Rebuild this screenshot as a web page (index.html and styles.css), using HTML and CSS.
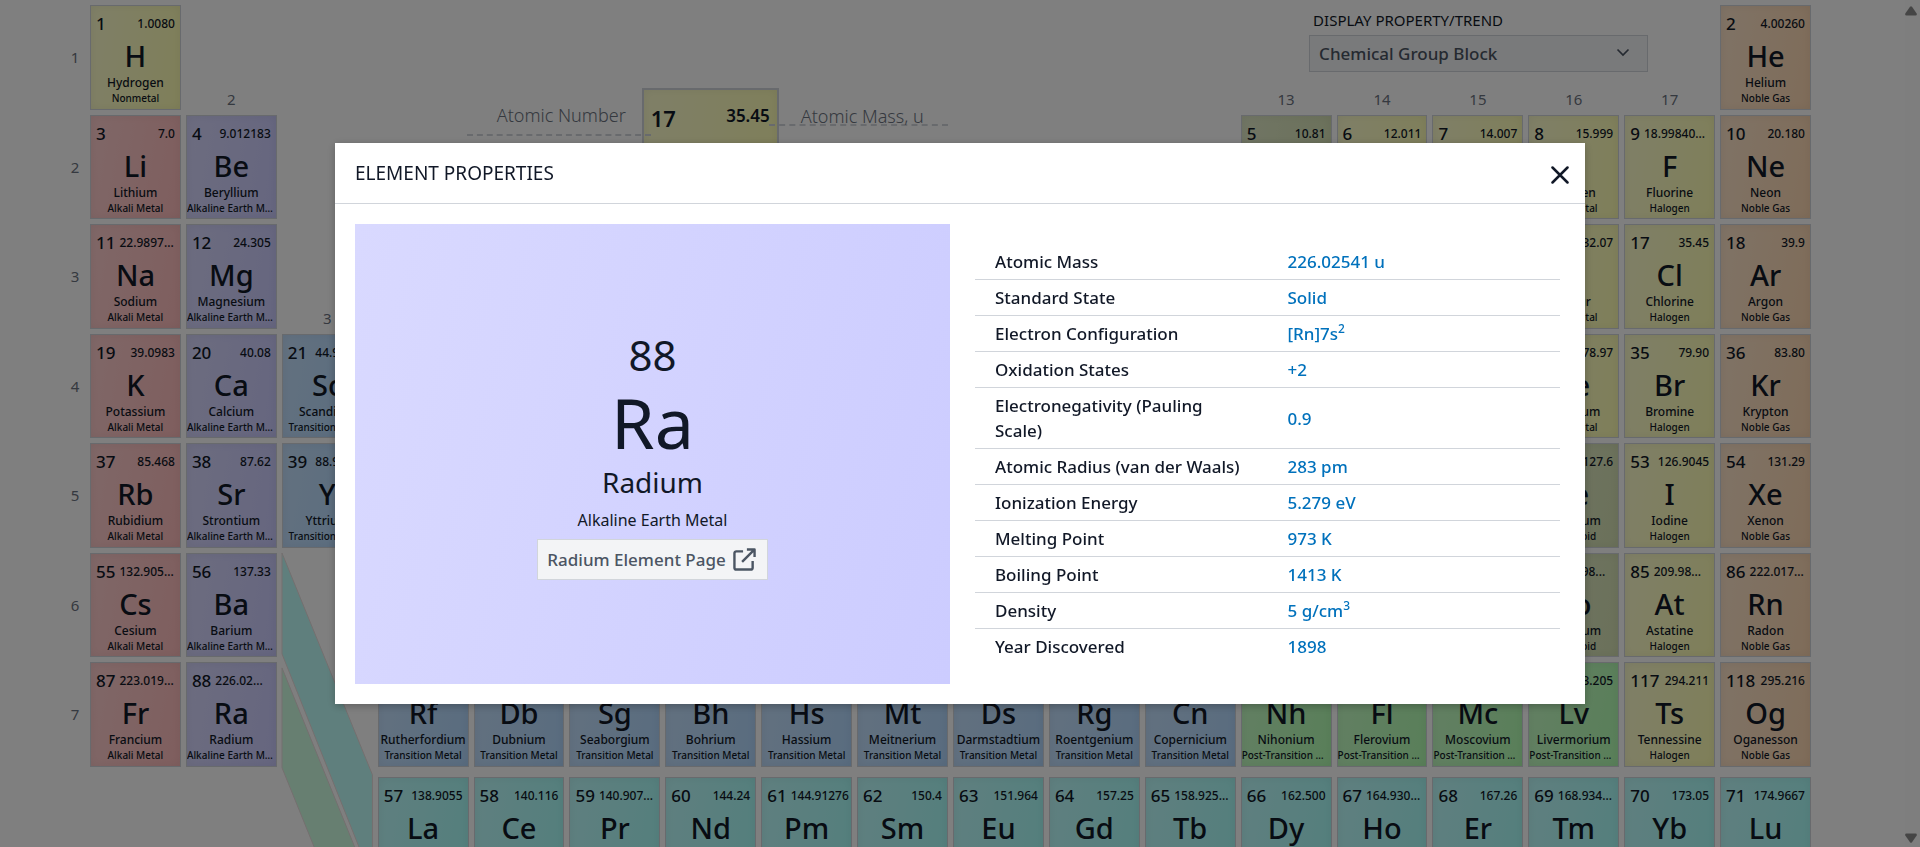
FILE: index.html
```html
<!DOCTYPE html>
<html lang="en">
<head>
<meta charset="utf-8">
<title>Periodic Table of Elements</title>
<link rel="stylesheet" href="styles.css">
</head>
<body>
<main class="table-grid" id="grid">
  <div class="legend">
    <div class="legend-label legend-number">Atomic Number</div>
    <div class="legend-tile nonmetal"><span class="legend-z">17</span><span class="legend-mass">35.45</span></div>
    <div class="legend-label legend-weight">Atomic Mass, u</div>
  </div>
  <div class="trend">
    <label class="trend-label" for="trend">DISPLAY PROPERTY/TREND</label>
    <div class="trend-box">
      <select class="trend-select" id="trend"><option>Chemical Group Block</option></select>
      <svg class="trend-arrow" viewBox="0 0 14 9" aria-hidden="true"><path d="M1.5 1.5 7 7l5.500-5.500"/></svg>
    </div>
  </div>
  <div class="bands">
    <svg viewBox="0 0 91 438" aria-hidden="true">
      <polygon class="band-lanthanide" points="0,0 90.500,222 90.500,328 0,101"/>
      <polygon class="band-actinide" points="0,115 90.500,338 90.500,438 0,215"/>
    </svg>
  </div>
</main>
<div class="scrollbar">
  <svg viewBox="0 0 12 10" aria-hidden="true"><path d="M5 .8Q6-.3 7 .8l4.700 6.700Q12.300 9.500 10.500 9.500h-9Q-.3 9.500.3 7.500z"/></svg>
  <svg viewBox="0 0 12 10" aria-hidden="true"><path d="M5 9.200Q6 10.300 7 9.200l4.700-6.700Q12.300.5 10.500.5h-9Q-.3.5.3 2.500z"/></svg>
</div>
<div class="overlay">
  <section class="modal" role="dialog" aria-labelledby="modal-title">
    <header class="modal-head">
      <h2 class="modal-title" id="modal-title">ELEMENT PROPERTIES</h2>
      <button class="close" type="button" aria-label="Close"><svg viewBox="0 0 18 18" aria-hidden="true"><path d="M1.500 1.500l15 15M16.500 1.500l-15 15"/></svg></button>
    </header>
    <div class="modal-body">
      <div class="card">
        <div class="card-number">88</div>
        <div class="card-symbol">Ra</div>
        <div class="card-name">Radium</div>
        <div class="card-group">Alkaline Earth Metal</div>
        <a class="card-link" href="#radium">Radium Element Page
          <svg viewBox="0 0 24 24" aria-hidden="true"><path d="M10.500 3.500H3.500a2 2 0 0 0-2 2v15a2 2 0 0 0 2 2h15a2 2 0 0 0 2-2v-7M9.500 14.500 22 2M14.500 1.500h8v8"/></svg>
        </a>
      </div>
      <table class="props">
        <tr><th scope="row">Atomic Mass</th><td>226.02541 u</td></tr>
        <tr><th scope="row">Standard State</th><td>Solid</td></tr>
        <tr><th scope="row">Electron Configuration</th><td>[Rn]7s<sup>2</sup></td></tr>
        <tr><th scope="row">Oxidation States</th><td>+2</td></tr>
        <tr><th scope="row">Electronegativity (Pauling Scale)</th><td>0.9</td></tr>
        <tr><th scope="row">Atomic Radius (van der Waals)</th><td>283 pm</td></tr>
        <tr><th scope="row">Ionization Energy</th><td>5.279 eV</td></tr>
        <tr><th scope="row">Melting Point</th><td>973 K</td></tr>
        <tr><th scope="row">Boiling Point</th><td>1413 K</td></tr>
        <tr><th scope="row">Density</th><td>5 g/cm<sup>3</sup></td></tr>
        <tr><th scope="row">Year Discovered</th><td>1898</td></tr>
      </table>
    </div>
  </section>
</div>
<script src="table.js"></script>
</body>
</html>
```

FILE: styles.css
```css
* { box-sizing: border-box; }
body {
  margin: 0;
  height: 100vh;
  overflow: hidden;
  background: #fff;
  color: #111827;
  font-family: "Noto Sans", "Open Sans", sans-serif;
}

/* periodic table */
.table-grid {
  display: grid;
  grid-template-columns: 20px repeat(18, minmax(0, 1fr));
  gap: 5px;
  padding: 5px 109px 0 65px;
}
.period, .group {
  color: #6b7280;
  font-size: 15px;
  line-height: 20px;
  text-align: center;
}
.period { align-self: center; }
.group { align-self: end; padding-bottom: 1px; }

.tile {
  display: flex;
  flex-direction: column;
  align-self: start;
  aspect-ratio: 20 / 23;
  overflow: hidden;
  padding: 6px 0 0;
  border: 1px solid #d1d5db;
  text-align: center;
  white-space: nowrap;
  font-weight: 500;
}
.tile-head {
  display: flex;
  gap: 4px;
  padding: 0 5px;
  line-height: 24px;
}
.tile-z { font-size: 17px; }
.tile-mass { flex: 1; font-size: 12px; text-align: right; }
.tile-mass.cut { text-align: left; }
.tile-symbol { font-size: 29px; line-height: 40px; }
.tile-name { font-size: 12px; line-height: 16px; margin-top: -1px; }
.tile-group {
  overflow: hidden;
  font-size: 10px;
  line-height: 14px;
  text-overflow: ellipsis;
}
.series { margin-top: 5px; }

.nonmetal { background: linear-gradient(100deg, #ffffcf, #ffffb3); }
.alkali { background: linear-gradient(100deg, #ffcfcf, #ffbdbd); }
.alkaline { background: linear-gradient(100deg, #d9d9ff, #ccccff); }
.transition { background: linear-gradient(100deg, #c6e2ff, #b3d9ff); }
.metalloid { background: linear-gradient(100deg, #e2ebc9, #d6e2b4); }
.post { background: linear-gradient(100deg, #c6ffc6, #b3ffb3); }
.noble { background: linear-gradient(100deg, #ffe6cc, #ffd9b3); }
.lanthanide { background: linear-gradient(100deg, #bfffff, #a8fffa); }
.tile, .legend-tile { box-shadow: inset 0 0 10px rgba(0, 0, 0, .06); }

.bands { grid-column: 4; grid-row: 6; height: 0; }
.bands svg { display: block; width: 100%; overflow: visible; }
.bands polygon { stroke: #e8dede; stroke-width: 1; }
.band-lanthanide { fill: #bffffa; }
.band-actinide { fill: #ceffe2; }

.legend {
  grid-column: 4 / span 10;
  grid-row: 1 / span 3;
  display: flex;
  align-items: flex-start;
  padding: 83px 0 0 185px;
}
.legend-tile {
  display: flex;
  justify-content: space-between;
  width: 137px;
  height: 150px;
  padding: 10px 7px;
  border: 2px solid #d1d5db;
  font-weight: 600;
}
.legend-z { font-size: 22px; line-height: 36px; }
.legend-mass { font-size: 17px; line-height: 32px; }
.legend-label {
  position: relative;
  border-bottom: 2px dashed #d1d5db;
  color: #6b7280;
  font-size: 18px;
  font-weight: 300;
  white-space: nowrap;
}
.legend-number {
  width: 184px;
  height: 48px;
  margin-right: -9px;
  padding: 0 0 0 30px;
  line-height: 54px;
}
.legend-weight {
  width: 179px;
  height: 38px;
  margin-left: -10px;
  padding-left: 32px;
  line-height: 56px;
}

.trend {
  grid-column: 14 / span 5;
  grid-row: 1;
  justify-self: end;
  width: 339px;
  margin-right: 67px;
}
.trend-label {
  display: block;
  padding: 3px 4px;
  font-size: 15px;
  line-height: 24px;
}
.trend-box { position: relative; }
.trend-select {
  width: 100%;
  height: 37px;
  appearance: none;
  padding: 0 9px;
  border: 1px solid #d1d5db;
  border-radius: 0;
  background: #f3f4f6;
  color: #4b5563;
  font: 500 17px "Noto Sans", "Open Sans", sans-serif;
}
.trend-arrow {
  position: absolute;
  top: 13px;
  right: 18px;
  width: 14px;
  fill: none;
  stroke: #4b5563;
  stroke-width: 1.7;
}

.scrollbar {
  position: fixed;
  inset: 0 0 0 auto;
  display: flex;
  flex-direction: column;
  justify-content: space-between;
  width: 15px;
  padding: 6px 0 4px;
  background: #fcfcfc;
}
.scrollbar svg { width: 12px; fill: #8b8b8b; }

/* dialog */
.overlay {
  position: fixed;
  inset: 0;
  display: flex;
  align-items: center;
  justify-content: center;
  background: rgba(0, 0, 0, .5);
}
.modal {
  width: 1250px;
  max-width: 95%;
  background: #fff;
  box-shadow: 0 2px 8px rgba(0, 0, 0, .25);
}
.modal-head {
  display: flex;
  align-items: center;
  justify-content: space-between;
  padding: 15px 16px 15px 20px;
  border-bottom: 1px solid #d1d5db;
}
.modal-title {
  margin: 0;
  font-size: 19px;
  font-weight: 400;
  line-height: 30px;
}
.close {
  display: flex;
  padding: 3px 0 0;
  border: 0;
  background: none;
}
.close svg {
  width: 18px;
  fill: none;
  stroke: #111827;
  stroke-width: 2.5;
  stroke-linecap: round;
}
.modal-body {
  display: grid;
  grid-template-columns: 595fr 585fr;
  gap: 25px;
  align-items: center;
  padding: 20px 25px 20px 20px;
}
.card {
  display: flex;
  flex-direction: column;
  align-items: center;
  justify-content: center;
  min-height: 460px;
  background: linear-gradient(105deg, #d9d9ff, #ccccff);
}
.card-number { font-size: 42px; line-height: 53px; }
.card-symbol { font-size: 70px; line-height: 82px; }
.card-name { font-size: 28px; line-height: 38px; }
.card-group { font-size: 16px; line-height: 38px; }
.card-link {
  display: flex;
  align-items: center;
  gap: 7px;
  padding: 7px 11px 7px 9px;
  border: 1px solid #d1d5db;
  background: #f3f4f6;
  color: #4b5563;
  font-size: 17px;
  font-weight: 500;
  line-height: 25px;
  text-decoration: none;
}
.card-link svg {
  width: 23px;
  fill: none;
  stroke: currentColor;
  stroke-width: 2.5;
  stroke-linejoin: round;
}
.props {
  width: 100%;
  table-layout: fixed;
  border-collapse: collapse;
  font-size: 17px;
  line-height: 25px;
}
.props th, .props td {
  padding: 5px 20px;
  font-weight: 500;
  text-align: left;
}
.props td { color: #0071bc; }
.props tr + tr { border-top: 1px solid #d1d5db; }
.props sup { font-size: 12px; line-height: 0; }
```

FILE: table.js
```js
const groups = {
  nonmetal: "Nonmetal", halogen: "Halogen", noble: "Noble Gas", alkali: "Alkali Metal",
  alkaline: "Alkaline Earth Metal", transition: "Transition Metal", metalloid: "Metalloid",
  post: "Post-Transition Metal", lanthanide: "Lanthanide"
};

// atomic number, mass, symbol, name, group block, row, column
const elements = [
  [1, "1.0080", "H", "Hydrogen", "nonmetal", 1, 1],
  [2, "4.00260", "He", "Helium", "noble", 1, 18],
  [3, "7.0", "Li", "Lithium", "alkali", 2, 1],
  [4, "9.012183", "Be", "Beryllium", "alkaline", 2, 2],
  [5, "10.81", "B", "Boron", "metalloid", 2, 13],
  [6, "12.011", "C", "Carbon", "nonmetal", 2, 14],
  [7, "14.007", "N", "Nitrogen", "nonmetal", 2, 15],
  [8, "15.999", "O", "Oxygen", "nonmetal", 2, 16],
  [9, "18.99840...", "F", "Fluorine", "halogen", 2, 17],
  [10, "20.180", "Ne", "Neon", "noble", 2, 18],
  [11, "22.9897...", "Na", "Sodium", "alkali", 3, 1],
  [12, "24.305", "Mg", "Magnesium", "alkaline", 3, 2],
  [16, "32.07", "S", "Sulfur", "nonmetal", 3, 16],
  [17, "35.45", "Cl", "Chlorine", "halogen", 3, 17],
  [18, "39.9", "Ar", "Argon", "noble", 3, 18],
  [19, "39.0983", "K", "Potassium", "alkali", 4, 1],
  [20, "40.08", "Ca", "Calcium", "alkaline", 4, 2],
  [21, "44.95591", "Sc", "Scandium", "transition", 4, 3],
  [34, "78.97", "Se", "Selenium", "nonmetal", 4, 16],
  [35, "79.90", "Br", "Bromine", "halogen", 4, 17],
  [36, "83.80", "Kr", "Krypton", "noble", 4, 18],
  [37, "85.468", "Rb", "Rubidium", "alkali", 5, 1],
  [38, "87.62", "Sr", "Strontium", "alkaline", 5, 2],
  [39, "88.90584", "Y", "Yttrium", "transition", 5, 3],
  [52, "127.6", "Te", "Tellurium", "metalloid", 5, 16],
  [53, "126.9045", "I", "Iodine", "halogen", 5, 17],
  [54, "131.29", "Xe", "Xenon", "noble", 5, 18],
  [55, "132.905...", "Cs", "Cesium", "alkali", 6, 1],
  [56, "137.33", "Ba", "Barium", "alkaline", 6, 2],
  [84, "208.98...", "Po", "Polonium", "metalloid", 6, 16],
  [85, "209.98...", "At", "Astatine", "halogen", 6, 17],
  [86, "222.017...", "Rn", "Radon", "noble", 6, 18],
  [87, "223.019...", "Fr", "Francium", "alkali", 7, 1],
  [88, "226.02...", "Ra", "Radium", "alkaline", 7, 2],
  [104, "267.122", "Rf", "Rutherfordium", "transition", 7, 4],
  [105, "268.126", "Db", "Dubnium", "transition", 7, 5],
  [106, "269.128", "Sg", "Seaborgium", "transition", 7, 6],
  [107, "270.133", "Bh", "Bohrium", "transition", 7, 7],
  [108, "269.1336", "Hs", "Hassium", "transition", 7, 8],
  [109, "277.154", "Mt", "Meitnerium", "transition", 7, 9],
  [110, "282.166", "Ds", "Darmstadtium", "transition", 7, 10],
  [111, "282.169", "Rg", "Roentgenium", "transition", 7, 11],
  [112, "286.179", "Cn", "Copernicium", "transition", 7, 12],
  [113, "286.182", "Nh", "Nihonium", "post", 7, 13],
  [114, "290.192", "Fl", "Flerovium", "post", 7, 14],
  [115, "290.196", "Mc", "Moscovium", "post", 7, 15],
  [116, "293.205", "Lv", "Livermorium", "post", 7, 16],
  [117, "294.211", "Ts", "Tennessine", "halogen", 7, 17],
  [118, "295.216", "Og", "Oganesson", "noble", 7, 18],
  [57, "138.9055", "La", "Lanthanum", "lanthanide", 8, 4],
  [58, "140.116", "Ce", "Cerium", "lanthanide", 8, 5],
  [59, "140.907...", "Pr", "Praseodymium", "lanthanide", 8, 6],
  [60, "144.24", "Nd", "Neodymium", "lanthanide", 8, 7],
  [61, "144.91276", "Pm", "Promethium", "lanthanide", 8, 8],
  [62, "150.4", "Sm", "Samarium", "lanthanide", 8, 9],
  [63, "151.964", "Eu", "Europium", "lanthanide", 8, 10],
  [64, "157.25", "Gd", "Gadolinium", "lanthanide", 8, 11],
  [65, "158.925...", "Tb", "Terbium", "lanthanide", 8, 12],
  [66, "162.500", "Dy", "Dysprosium", "lanthanide", 8, 13],
  [67, "164.930...", "Ho", "Holmium", "lanthanide", 8, 14],
  [68, "167.26", "Er", "Erbium", "lanthanide", 8, 15],
  [69, "168.934...", "Tm", "Thulium", "lanthanide", 8, 16],
  [70, "173.05", "Yb", "Ytterbium", "lanthanide", 8, 17],
  [71, "174.9667", "Lu", "Lutetium", "lanthanide", 8, 18]
];

const grid = document.getElementById("grid");

function place(className, row, column, html) {
  const cell = document.createElement("div");
  cell.className = className;
  cell.style.gridArea = row + " / " + column;
  cell.innerHTML = html;
  grid.append(cell);
}

for (let period = 1; period <= 7; period++) place("period", period, 1, period);

for (const [group, row] of [[2, 1], [3, 3], [13, 1], [14, 1], [15, 1], [16, 1], [17, 1]]) {
  place("group", row, group + 1, group);
}

for (const [z, mass, symbol, name, block, row, column] of elements) {
  const colour = block === "halogen" ? "nonmetal" : block;
  const cut = mass.endsWith("...") ? " cut" : "";
  place(`tile ${colour}${row === 8 ? " series" : ""}`, row, column + 1,
    `<div class="tile-head"><span class="tile-z">${z}</span><span class="tile-mass${cut}">${mass}</span></div>
     <div class="tile-symbol">${symbol}</div>
     <div class="tile-name">${name}</div>
     <div class="tile-group">${groups[block]}</div>`);
}
```
